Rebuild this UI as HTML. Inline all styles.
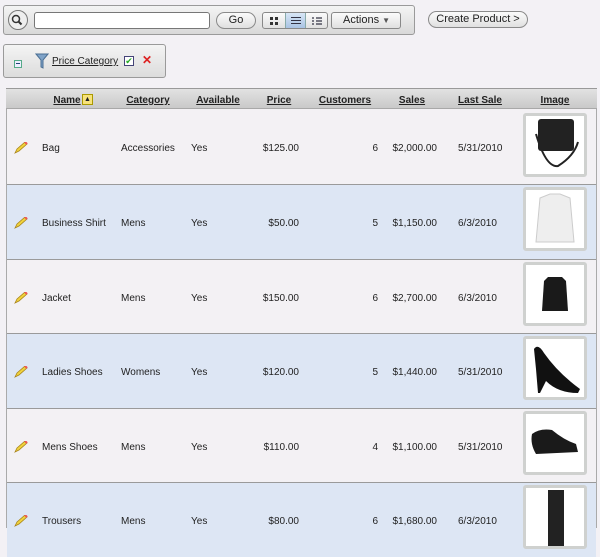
<!DOCTYPE html>
<html><head><style>
*{margin:0;padding:0;box-sizing:border-box}
body{width:600px;height:528px;overflow:hidden;background:#f3f1f5;font-family:"Liberation Sans",Arial,sans-serif;font-size:10px;color:#222;position:relative}
.a{position:absolute}
.tb{left:3px;top:5px;width:412px;height:30px;border:1px solid #9a9a9a;border-radius:3px;background:linear-gradient(#f4f4f4,#d9d9d9)}
.btn{position:absolute;border:1px solid #8a8a8a;border-radius:9px;background:linear-gradient(#fbfbfb,#e0e0e0);font-size:11px;text-align:center;line-height:15px;height:17px}
.fb{left:3px;top:44px;width:163px;height:34px;border:1px solid #9a9a9a;border-radius:3px;background:linear-gradient(#f4f4f4,#dcdcdc)}
.tbl{left:6px;top:88px;width:591px;height:440px;border-left:1px solid #aaa;border-right:1px solid #aaa}
.hd{left:6px;top:88px;width:591px;height:22px;background:linear-gradient(#e2e2e2,#c9c9c9);border-top:1px solid #999;border-bottom:2px solid #a8a8a8}
.h{position:absolute;top:6px;font-weight:bold;text-decoration:underline;font-size:10px;color:#222;transform:translateX(-50%)}
.row{position:absolute;left:7px;width:589px;border-top:1px solid #9a9a9a}
.c{position:absolute;top:33px;font-size:10px}
.r{text-align:right}
.img{position:absolute;left:516px;top:2px;width:64px;height:64px;background:#fff;border:3px solid #cfd1cf;border-radius:3px;overflow:hidden}
.p{position:absolute;left:7px;top:32px}
</style></head><body>
<div class="a tb">
 <div class="a" style="left:4px;top:4px;width:20px;height:20px;border:1px solid #777;border-radius:50%;background:#eee"><svg width="18" height="18"><circle cx="7" cy="8" r="3.5" fill="none" stroke="#333" stroke-width="1.5"/><path d="M9.5 10.5l3 3" stroke="#333" stroke-width="2"/></svg></div>
 <div class="a" style="left:30px;top:6px;width:176px;height:17px;border:1px solid #777;border-radius:3px;background:#fff"></div>
 <div class="btn" style="left:212px;top:6px;width:40px">Go</div>
 <div class="a" style="left:258px;top:6px;width:66px;height:17px;border:1px solid #888;border-radius:3px;background:linear-gradient(#fbfbfb,#e0e0e0)">
  <div class="a" style="left:22px;top:0;width:21px;height:15px;background:linear-gradient(#d8e6f6,#a9c3e3);border-left:1px solid #8aa;border-right:1px solid #8aa"></div>
  <svg class="a" style="left:6px;top:3px" width="10" height="10"><rect x="1" y="1" width="3" height="3" fill="#333"/><rect x="6" y="1" width="3" height="3" fill="#333"/><rect x="1" y="6" width="3" height="3" fill="#333"/><rect x="6" y="6" width="3" height="3" fill="#333"/></svg>
  <svg class="a" style="left:28px;top:3px" width="10" height="10"><path d="M0 1.5h10M0 4.5h10M0 7.5h10" stroke="#334" stroke-width="1"/></svg>
  <svg class="a" style="left:49px;top:3px" width="10" height="10"><path d="M0 2h2M4 2h6M0 5h2M4 5h6M0 8h2M4 8h6" stroke="#334" stroke-width="1.2"/></svg>
 </div>
 <div class="a" style="left:327px;top:6px;width:70px;height:17px;border:1px solid #888;border-radius:3px;background:linear-gradient(#fbfbfb,#e0e0e0);font-size:11px;line-height:15px;padding-left:11px">Actions <span style="font-size:8px;color:#555">▼</span></div>
</div>
<div class="btn" style="left:428px;top:11px;width:100px">Create Product &gt;</div>
<div class="a fb">
 <div class="a" style="left:10px;top:15px;width:8px;height:8px;border:1px solid #5a8;background:#eef"><div class="a" style="left:1px;top:2px;width:4px;height:1px;background:#247"></div></div>
 <svg class="a" style="left:31px;top:8px" width="14" height="16"><path d="M1 1h12l-5 6v8l-2-1V7z" fill="#7fa3c8" stroke="#4a6e93"/></svg>
 <div class="a" style="left:48px;top:11px;text-decoration:underline;font-size:10px">Price Category</div>
 <div class="a" style="left:120px;top:11px;width:10px;height:10px;border:1px solid #447;background:#fff;color:#2a2;font-size:9px;line-height:8px;text-align:center">✔</div>
 <div class="a" style="left:138px;top:8px;color:#d22;font-size:12px;font-weight:bold">✕</div>
</div>
<div class="a tbl"></div>
<div class="a hd">
 <span class="h" style="left:61px">Name</span>
 <div class="a" style="left:76px;top:5px;width:11px;height:11px;background:#f7e27a;border:1px solid #a90;font-size:7px;line-height:9px;text-align:center">▲</div>
 <span class="h" style="left:142px">Category</span>
 <span class="h" style="left:212px">Available</span>
 <span class="h" style="left:273px">Price</span>
 <span class="h" style="left:339px">Customers</span>
 <span class="h" style="left:406px">Sales</span>
 <span class="h" style="left:474px">Last Sale</span>
 <span class="h" style="left:549px">Image</span>
</div>

<div class="row" style="top:109px;height:75px;background:#f3f1f4;border-top-color:transparent">
 <svg class="p" width="14" height="12"><path d="M1 11l2-4 8-7 2 2-8 7z" fill="#f0d23c" stroke="#a8841a" stroke-width=".8"/><path d="M11 0l2 2" stroke="#e55" stroke-width="2"/></svg>
 <div class="c" style="left:35px">Bag</div><div class="c" style="left:114px">Accessories</div><div class="c" style="left:184px">Yes</div>
 <div class="c r" style="right:297px">$125.00</div><div class="c r" style="right:218px">6</div><div class="c r" style="right:159px">$2,000.00</div><div class="c" style="left:451px">5/31/2010</div>
 <div class="img" style="top:3px"><svg width="58" height="58"><rect x="12" y="3" width="36" height="32" rx="3" fill="#222"/><path d="M10 18 Q20 52 32 50 Q48 40 52 26" fill="none" stroke="#222" stroke-width="2"/></svg></div>
</div>
<div class="row" style="top:184px;height:75px;background:#dde6f4">
 <svg class="p" width="14" height="12"><path d="M1 11l2-4 8-7 2 2-8 7z" fill="#f0d23c" stroke="#a8841a" stroke-width=".8"/><path d="M11 0l2 2" stroke="#e55" stroke-width="2"/></svg>
 <div class="c" style="left:35px">Business Shirt</div><div class="c" style="left:114px">Mens</div><div class="c" style="left:184px">Yes</div>
 <div class="c r" style="right:297px">$50.00</div><div class="c r" style="right:218px">5</div><div class="c r" style="right:159px">$1,150.00</div><div class="c" style="left:451px">6/3/2010</div>
 <div class="img"><svg width="58" height="58"><path d="M14 8 L24 4 L34 4 L44 8 L48 52 L10 52 Z" fill="#eee" stroke="#ccc"/></svg></div>
</div>
<div class="row" style="top:259px;height:74px;background:#f3f1f4">
 <svg class="p" width="14" height="12"><path d="M1 11l2-4 8-7 2 2-8 7z" fill="#f0d23c" stroke="#a8841a" stroke-width=".8"/><path d="M11 0l2 2" stroke="#e55" stroke-width="2"/></svg>
 <div class="c" style="left:35px">Jacket</div><div class="c" style="left:114px">Mens</div><div class="c" style="left:184px">Yes</div>
 <div class="c r" style="right:297px">$150.00</div><div class="c r" style="right:218px">6</div><div class="c r" style="right:159px">$2,700.00</div><div class="c" style="left:451px">6/3/2010</div>
 <div class="img"><svg width="58" height="58"><path d="M22 12 L36 12 L40 16 L42 46 L16 46 L18 16 Z" fill="#1a1a1a"/></svg></div>
</div>
<div class="row" style="top:333px;height:75px;background:#dde6f4">
 <svg class="p" width="14" height="12"><path d="M1 11l2-4 8-7 2 2-8 7z" fill="#f0d23c" stroke="#a8841a" stroke-width=".8"/><path d="M11 0l2 2" stroke="#e55" stroke-width="2"/></svg>
 <div class="c" style="left:35px">Ladies Shoes</div><div class="c" style="left:114px">Womens</div><div class="c" style="left:184px">Yes</div>
 <div class="c r" style="right:297px">$120.00</div><div class="c r" style="right:218px">5</div><div class="c r" style="right:159px">$1,440.00</div><div class="c" style="left:451px">5/31/2010</div>
 <div class="img"><svg width="58" height="58"><path d="M8 10 Q12 4 18 14 Q32 34 54 50 L52 54 Q32 54 20 42 L14 54 L12 54 L10 30 Z" fill="#111"/></svg></div>
</div>
<div class="row" style="top:408px;height:74px;background:#f3f1f4">
 <svg class="p" width="14" height="12"><path d="M1 11l2-4 8-7 2 2-8 7z" fill="#f0d23c" stroke="#a8841a" stroke-width=".8"/><path d="M11 0l2 2" stroke="#e55" stroke-width="2"/></svg>
 <div class="c" style="left:35px">Mens Shoes</div><div class="c" style="left:114px">Mens</div><div class="c" style="left:184px">Yes</div>
 <div class="c r" style="right:297px">$110.00</div><div class="c r" style="right:218px">4</div><div class="c r" style="right:159px">$1,100.00</div><div class="c" style="left:451px">5/31/2010</div>
 <div class="img"><svg width="58" height="58"><path d="M6 20 Q14 14 26 16 Q38 26 50 30 L52 38 L10 40 Q4 30 6 20 Z" fill="#1a1a1a"/></svg></div>
</div>
<div class="row" style="top:482px;height:75px;background:#dde6f4">
 <svg class="p" width="14" height="12"><path d="M1 11l2-4 8-7 2 2-8 7z" fill="#f0d23c" stroke="#a8841a" stroke-width=".8"/><path d="M11 0l2 2" stroke="#e55" stroke-width="2"/></svg>
 <div class="c" style="left:35px">Trousers</div><div class="c" style="left:114px">Mens</div><div class="c" style="left:184px">Yes</div>
 <div class="c r" style="right:297px">$80.00</div><div class="c r" style="right:218px">6</div><div class="c r" style="right:159px">$1,680.00</div><div class="c" style="left:451px">6/3/2010</div>
 <div class="img"><div class="a" style="left:22px;top:2px;width:16px;height:60px;background:#222"></div></div>
</div>
</body></html>
